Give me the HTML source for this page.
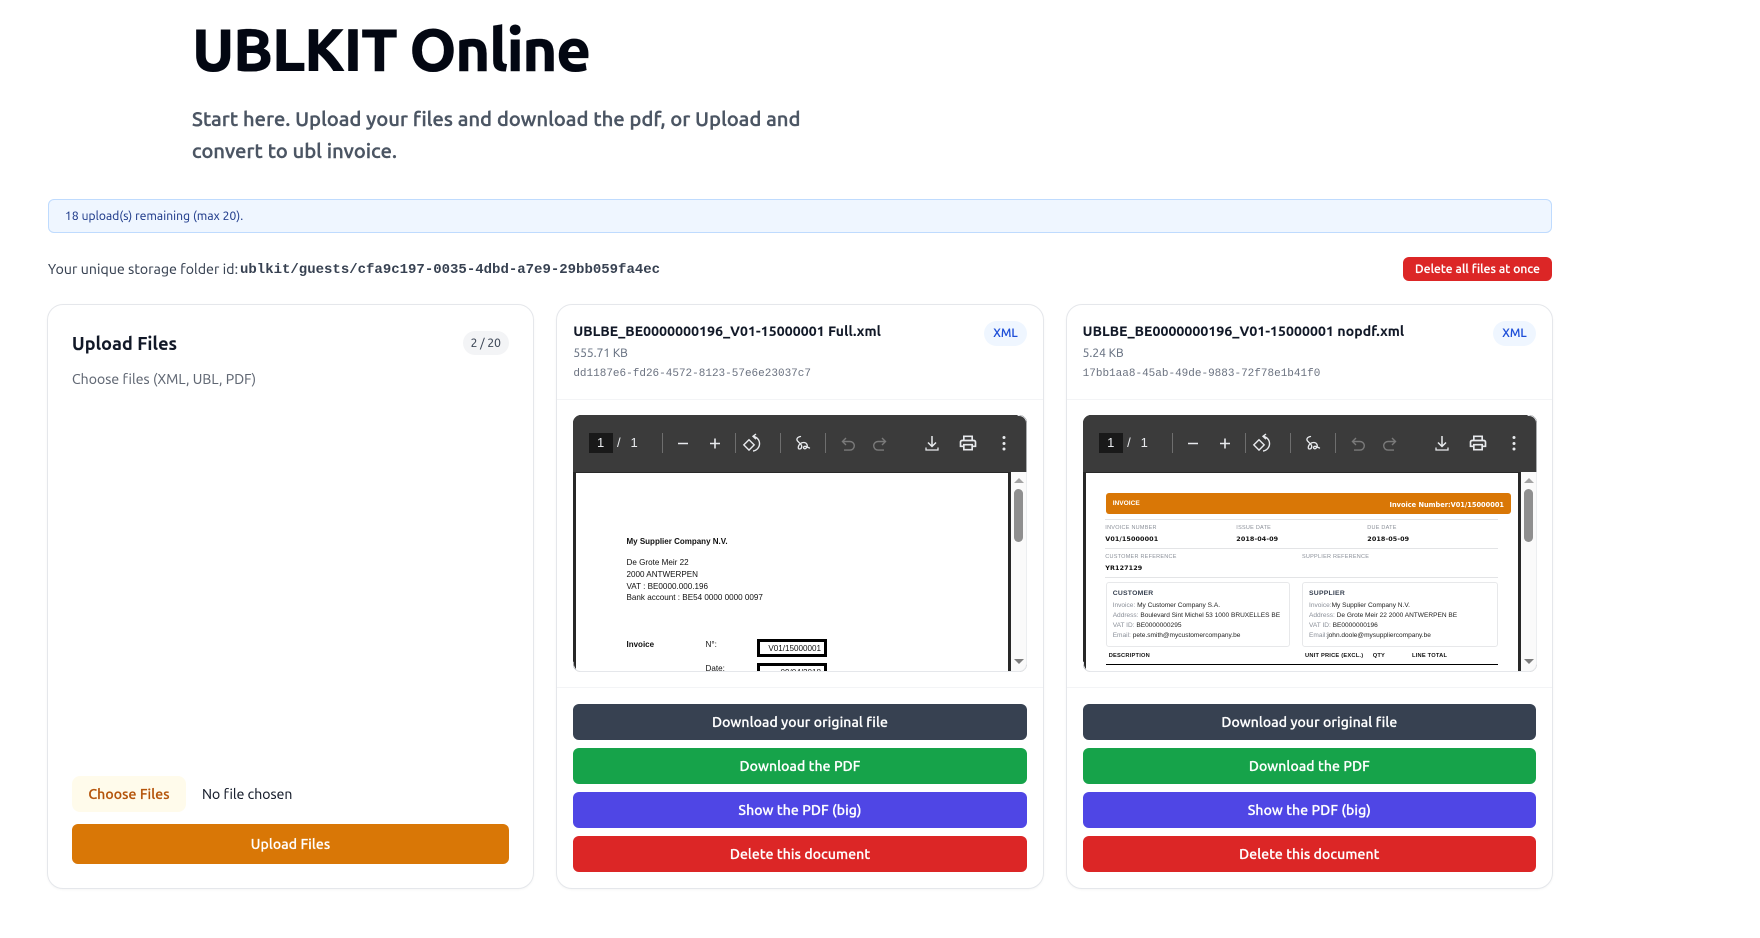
<!DOCTYPE html>
<html lang="en"><head><meta charset="utf-8"><title>UBLKIT Online</title>
<style>
*{box-sizing:border-box}
html,body{margin:0;padding:0;width:1760px;height:938px;overflow:hidden;background:#fff}
body{position:relative;font-family:Ubuntu,"Liberation Sans",sans-serif;color:#111827;-webkit-text-stroke:.1px}
.a,.t,.s{position:absolute}
.t{white-space:nowrap;line-height:20px}
.card{position:absolute;top:303.7px;height:585.5px;width:486.8px;background:#fff;border:1px solid #e5e7eb;border-radius:16px;box-shadow:0 1px 2px rgba(0,0,0,.04)}
.hr{position:absolute;height:1px;background:#f3f4f6;width:484.8px}
.med{font-weight:500;-webkit-text-stroke:.22px;letter-spacing:.1px}
.btn{position:absolute;display:flex;align-items:center;justify-content:center;color:#fff;font-size:14px;font-weight:500;-webkit-text-stroke:.25px;letter-spacing:.09px;border-radius:6px;height:36px;width:453.33px}
.mono{font-family:"Liberation Mono",monospace;-webkit-text-stroke:0}
.v{position:absolute;left:0;top:415px;width:453.33px;height:257px;border-radius:8px;overflow:hidden;background:#282828;-webkit-text-stroke:0}
.v:after{content:"";position:absolute;inset:0;border:1px solid #e5e7eb;border-radius:8px;pointer-events:none;clip-path:polygon(100% 0,100% 100%,0 100%,0 96%,98% 96%,98% 0)}
.tb{position:absolute;left:-573.33px;top:-415px;width:1760px;height:938px}
.tb .bar{position:absolute;left:573px;top:415px;width:455px;height:57px;background:#3b3b3b}
.tb .sep{position:absolute;top:433px;width:1px;height:20px;background:#6e6e6e}
.tb svg{position:absolute;top:433px;width:20px;height:20px}
.tb .n{position:absolute;top:433px;line-height:20px;font-size:13px;color:#e8eaed;font-family:"Liberation Sans",sans-serif}
.track{position:absolute;left:437.33px;top:57px;width:16px;height:200px;background:#fafafa}
.thumb{position:absolute;left:3.4px;top:17px;width:9px;height:53px;border-radius:5px;background:#8f8f8f}
.up,.dn{position:absolute;left:3px;width:0;height:0;border-left:5px solid transparent;border-right:5px solid transparent}
.up{top:6px;border-bottom:5px solid #a3a3a3}
.dn{top:187px;border-top:5px solid #7d7d7d}
.ly{position:absolute;top:-415px;width:1760px;height:938px;filter:blur(.25px);font-family:"Liberation Sans",sans-serif;color:#111}
.ly .t{line-height:12px;margin-top:.8px}
.lb{font-size:5.5px;color:#8b9099;letter-spacing:.25px}
.vl{font-family:"DejaVu Sans",sans-serif;font-size:6.4px;font-weight:700;color:#111;letter-spacing:.1px}
.ln{position:absolute;height:1px;background:#e3e4e6}
.bx{position:absolute;border:1px solid #e7e8ea;border-radius:3px;top:581.5px;height:65.5px}
.bt{font-size:6.8px;font-weight:700;color:#374151;letter-spacing:.25px}
.bt2{margin-top:2px !important}
.tx{font-size:6.55px;color:#222}
.tx i{font-style:normal;color:#8a8f98}
.th{font-size:5.7px;font-weight:700;color:#111;letter-spacing:.22px}
.sm{font-size:8.1px;color:#111}
</style></head><body>

<div class="t" style="left:192px;top:10px;line-height:80px;font-size:60px;font-weight:800;letter-spacing:-1.5px;color:#030712">UBLKIT Online</div>
<div class="t" style="left:192px;top:103px;line-height:32px;font-size:20px;font-weight:500;-webkit-text-stroke:.45px;letter-spacing:.14px;color:#4b5563">Start here. Upload your files and download the pdf, or Upload and</div>
<div class="t" style="left:192px;top:135px;line-height:32px;font-size:20px;font-weight:500;-webkit-text-stroke:.45px;letter-spacing:.14px;color:#4b5563">convert to ubl invoice.</div>

<div class="a" style="left:48px;top:199px;width:1504px;height:34px;background:#eff6ff;border:1px solid #bfdbfe;border-radius:6px"></div>
<div class="t" style="left:65px;top:207px;font-size:12px;letter-spacing:.1px;color:#1e3a8a">18 upload(s) remaining (max 20).</div>

<div class="t" style="left:48px;top:259px;font-size:14px;letter-spacing:.12px;color:#374151">Your unique storage folder id:</div>
<b class="t mono" style="left:240px;top:260px;font-size:14px;color:#374151">ublkit/guests/cfa9c197-0035-4dbd-a7e9-29bb059fa4ec</b>
<div class="a med" style="left:1403px;top:257px;width:149px;height:24px;background:#dc2626;border-radius:6px;color:#fff;font-size:12px;display:flex;align-items:center;justify-content:center">Delete all files at once</div>

<!-- Upload card -->
<div class="card" style="left:47.3px"></div>
<div class="t" style="left:72px;top:334px;font-size:18px;font-weight:700;letter-spacing:.1px;color:#111827">Upload Files</div>
<div class="a" style="left:462.5px;top:331px;width:46.5px;height:24px;border-radius:12px;background:#f3f4f6;color:#374151;font-size:12px;display:flex;align-items:center;justify-content:center">2 / 20</div>
<div class="t" style="left:72px;top:369px;font-size:14px;letter-spacing:.08px;color:#5f6672">Choose files (XML, UBL, PDF)</div>
<div class="a med" style="left:72px;top:776px;width:114px;height:36px;border-radius:8px;background:#fffbeb;color:#b45309;font-size:14px;display:flex;align-items:center;justify-content:center">Choose Files</div>
<div class="t" style="left:202px;top:784px;font-size:14px;letter-spacing:.05px;color:#111827">No file chosen</div>
<div class="a med" style="left:72px;top:824px;width:437px;height:40px;border-radius:6px;background:#d97706;color:#fff;font-size:14px;display:flex;align-items:center;justify-content:center">Upload Files</div>

<!-- Document card 1 -->
<div class="card" style="left:556.3px;width:487.4px"></div>
<div class="hr" style="left:557.3px;top:398.5px;width:485.4px"></div>
<div class="hr" style="left:557.3px;top:687px;width:485.4px"></div>
<div class="t" style="left:573.33px;top:321px;font-size:14px;font-weight:700;letter-spacing:.1px;color:#111827">UBLBE_BE0000000196_V01-15000001 Full.xml</div>
<div class="t" style="left:573.33px;top:343.6px;font-size:12px;color:#667080">555.71 KB</div>
<div class="t mono" style="left:573.33px;top:363.8px;font-size:11px;color:#6b7280">dd1187e6-fd26-4572-8123-57e6e23037c7</div>
<div class="a" style="left:984px;top:321px;width:43px;height:25px;border-radius:13px;background:#eff6ff;color:#1d4ed8;font-size:12px;font-weight:500;display:flex;align-items:center;justify-content:center">XML</div>

<div class="v" style="left:573.33px">
  <div class="tb">
    <div class="bar"></div>
    <div class="a" style="left:589px;top:433px;width:24px;height:20px;background:#191919"></div>
    <div class="n" style="left:597px">1</div><div class="n" style="left:617px">/</div><div class="n" style="left:630.5px">1</div>
    <div class="sep" style="left:662px"></div><div class="sep" style="left:735px"></div><div class="sep" style="left:780px"></div><div class="sep" style="left:825px"></div>
    <svg style="left:672.7px" viewBox="0 0 20 20"><path d="M5 10.5h10" stroke="#e8eaed" stroke-width="1.6" fill="none"/></svg>
    <svg style="left:705px" viewBox="0 0 20 20"><path d="M5 10.5h10M10 5.5v10" stroke="#e8eaed" stroke-width="1.6" fill="none"/></svg>
    <svg style="left:742px" viewBox="0 0 20 20" fill="none" stroke="#e8eaed" stroke-width="1.4"><path d="M7 6.7l5.200 5.200-5.200 5.200-5.200-5.200z"/><path d="M11 3.300A7.400 7.400 0 0 1 11 18"/><path d="M14 1l-3 2.300 3 2.800"/></svg>
    <svg style="left:792px" viewBox="0 0 20 20" fill="none" stroke="#e8eaed" stroke-width="1.3" stroke-linecap="round"><path d="M8.500 3.500C5.500 4 4 6 5.500 8L9 11.500C10.500 13.500 9.500 16 7.500 16 5.500 16 6 12.500 8.500 10.500 10.500 9 14 9 15 11.500 16 14 13.500 16.500 12 15.500 10.800 14.500 12 12.800 14 13.500L17.500 15"/></svg>
    <svg style="left:838px" viewBox="0 0 20 20" fill="none" stroke="#7a7a7a" stroke-width="1.4"><path d="M8 5L4.500 8.500 8 12"/><path d="M4.500 8.500h7.500a4.300 4.300 0 0 1 0 8.600H6"/></svg>
    <svg style="left:870px" viewBox="0 0 20 20" fill="none" stroke="#7a7a7a" stroke-width="1.400"><path d="M12 5l3.500 3.500L12 12"/><path d="M15.500 8.500H8a4.300 4.300 0 0 0 0 8.600h6"/></svg>
    <svg style="left:922px" viewBox="0 0 20 20" fill="none" stroke="#e8eaed" stroke-width="1.500"><path d="M10 3v10M6 9.500l4 4 4-4"/><path d="M4 14.500v2.500h12v-2.500" stroke-width="1.300"/></svg>
    <svg style="left:958px" viewBox="0 0 24 24" fill="#e8eaed"><path d="M19 8h-1V3H6v5H5c-1.660 0-3 1.340-3 3v6h4v4h12v-4h4v-6c0-1.660-1.340-3-3-3zM8 5h8v3H8V5zm8 12v2H8v-4h8v2zm2-2v-2H6v2H4v-4c0-.55.45-1 1-1h14c.55 0 1 .45 1 1v4h-2z"/></svg>
    <svg style="left:994px" viewBox="0 0 20 20" fill="#e8eaed"><circle cx="10" cy="4.500" r="1.500"/><circle cx="10" cy="10.500" r="1.500"/><circle cx="10" cy="16" r="1.500"/></svg>
  </div>
  <div class="ly" style="left:-573.33px">
    <div class="a" style="left:576px;top:473px;width:432px;height:199px;background:#fff"></div>
    <div class="t" style="left:626.500px;top:535px;font-size:8px;font-weight:700">My Supplier Company N.V.</div>
    <div class="t sm" style="left:626.500px;top:556px">De Grote Meir 22</div>
    <div class="t sm" style="left:626.500px;top:568px">2000 ANTWERPEN</div>
    <div class="t sm" style="left:626.500px;top:580px">VAT : BE0000.000.196</div>
    <div class="t sm" style="left:626.500px;top:591px">Bank account : BE54 0000 0000 0097</div>
    <div class="t" style="left:626.500px;top:638px;font-size:8px;font-weight:700">Invoice</div>
    <div class="t sm" style="left:705.500px;top:638px">N°:</div>
    <div class="a" style="left:757px;top:639px;width:70px;height:18px;border:3px solid #000"></div>
    <div class="t sm" style="left:767px;top:642px;width:54px;text-align:right">V01/15000001</div>
    <div class="t sm" style="left:705.500px;top:662px">Date:</div>
    <div class="a" style="left:757px;top:663px;width:70px;height:18px;border:3px solid #000"></div>
    <div class="t sm" style="left:767px;top:666px;width:54px;text-align:right">09/04/2018</div>
  </div>
  <div class="track"><div class="up"></div><div class="thumb"></div><div class="dn"></div></div>
</div>

<div class="btn" style="left:573.33px;top:704px;background:#374151">Download your original file</div>
<div class="btn" style="left:573.33px;top:748px;background:#16a34a">Download the PDF</div>
<div class="btn" style="left:573.33px;top:792px;background:#4f46e5">Show the PDF (big)</div>
<div class="btn" style="left:573.33px;top:836px;background:#dc2626">Delete this document</div>

<!-- Document card 2 -->
<div class="card" style="left:1066px"></div>
<div class="hr" style="left:1067px;top:398.5px"></div>
<div class="hr" style="left:1067px;top:687px"></div>
<div class="t" style="left:1082.67px;top:321px;font-size:14px;font-weight:700;letter-spacing:.1px;color:#111827">UBLBE_BE0000000196_V01-15000001 nopdf.xml</div>
<div class="t" style="left:1082.67px;top:343.6px;font-size:12px;color:#667080">5.24 KB</div>
<div class="t mono" style="left:1082.67px;top:363.8px;font-size:11px;color:#6b7280">17bb1aa8-45ab-49de-9883-72f78e1b41f0</div>
<div class="a" style="left:1493px;top:321px;width:43px;height:25px;border-radius:13px;background:#eff6ff;color:#1d4ed8;font-size:12px;font-weight:500;display:flex;align-items:center;justify-content:center">XML</div>

<div class="v" style="left:1082.67px;width:454px">
  <div class="tb" style="left:-572.5px">
    <div class="bar"></div>
    <div class="a" style="left:589px;top:433px;width:24px;height:20px;background:#191919"></div>
    <div class="n" style="left:597px">1</div><div class="n" style="left:617px">/</div><div class="n" style="left:630.5px">1</div>
    <div class="sep" style="left:662px"></div><div class="sep" style="left:735px"></div><div class="sep" style="left:780px"></div><div class="sep" style="left:825px"></div>
    <svg style="left:672.7px" viewBox="0 0 20 20"><path d="M5 10.5h10" stroke="#e8eaed" stroke-width="1.6" fill="none"/></svg>
    <svg style="left:705px" viewBox="0 0 20 20"><path d="M5 10.5h10M10 5.5v10" stroke="#e8eaed" stroke-width="1.6" fill="none"/></svg>
    <svg style="left:742px" viewBox="0 0 20 20" fill="none" stroke="#e8eaed" stroke-width="1.4"><path d="M7 6.7l5.200 5.200-5.200 5.200-5.200-5.200z"/><path d="M11 3.300A7.400 7.400 0 0 1 11 18"/><path d="M14 1l-3 2.300 3 2.800"/></svg>
    <svg style="left:792px" viewBox="0 0 20 20" fill="none" stroke="#e8eaed" stroke-width="1.3" stroke-linecap="round"><path d="M8.500 3.500C5.500 4 4 6 5.500 8L9 11.500C10.500 13.500 9.500 16 7.500 16 5.500 16 6 12.500 8.500 10.500 10.500 9 14 9 15 11.500 16 14 13.500 16.500 12 15.500 10.800 14.500 12 12.800 14 13.500L17.500 15"/></svg>
    <svg style="left:838px" viewBox="0 0 20 20" fill="none" stroke="#7a7a7a" stroke-width="1.4"><path d="M8 5L4.500 8.500 8 12"/><path d="M4.500 8.500h7.500a4.300 4.300 0 0 1 0 8.600H6"/></svg>
    <svg style="left:870px" viewBox="0 0 20 20" fill="none" stroke="#7a7a7a" stroke-width="1.400"><path d="M12 5l3.500 3.500L12 12"/><path d="M15.500 8.500H8a4.300 4.300 0 0 0 0 8.600h6"/></svg>
    <svg style="left:922px" viewBox="0 0 20 20" fill="none" stroke="#e8eaed" stroke-width="1.500"><path d="M10 3v10M6 9.500l4 4 4-4"/><path d="M4 14.500v2.500h12v-2.500" stroke-width="1.300"/></svg>
    <svg style="left:958px" viewBox="0 0 24 24" fill="#e8eaed"><path d="M19 8h-1V3H6v5H5c-1.660 0-3 1.340-3 3v6h4v4h12v-4h4v-6c0-1.660-1.340-3-3-3zM8 5h8v3H8V5zm8 12v2H8v-4h8v2zm2-2v-2H6v2H4v-4c0-.55.45-1 1-1h14c.55 0 1 .45 1 1v4h-2z"/></svg>
    <svg style="left:994px" viewBox="0 0 20 20" fill="#e8eaed"><circle cx="10" cy="4.500" r="1.500"/><circle cx="10" cy="10.500" r="1.500"/><circle cx="10" cy="16" r="1.500"/></svg>
  </div>
  <div class="ly" style="left:-1082.67px">
    <div class="a" style="left:1085.500px;top:473px;width:432px;height:199px;background:#fff"></div>
    <div class="a" style="left:1106px;top:492.700px;width:405.300px;height:21px;background:#d97706;border-radius:3px"></div>
    <div class="t" style="left:1112.700px;top:497.700px;font-size:6.600px;font-weight:700;color:#fff">INVOICE</div>
    <div class="t" style="left:1380px;top:498.700px;width:124px;text-align:right;font-family:'DejaVu Sans',sans-serif;font-size:6.600px;font-weight:700;color:#fff">Invoice Number:V01/15000001</div>
    <div class="ln" style="left:1105px;top:518.500px;width:393px"></div>
    <div class="t lb" style="left:1105.300px;top:521px">INVOICE NUMBER</div>
    <div class="t lb" style="left:1236.300px;top:521px">ISSUE DATE</div>
    <div class="t lb" style="left:1367.300px;top:521px">DUE DATE</div>
    <div class="t vl" style="left:1105.300px;top:532.700px">V01/15000001</div>
    <div class="t vl" style="left:1236.300px;top:532.700px">2018-04-09</div>
    <div class="t vl" style="left:1367.300px;top:532.700px">2018-05-09</div>
    <div class="ln" style="left:1105px;top:547.500px;width:393px"></div>
    <div class="t lb" style="left:1105.300px;top:550px">CUSTOMER REFERENCE</div>
    <div class="t lb" style="left:1302px;top:550px">SUPPLIER REFERENCE</div>
    <div class="t vl" style="left:1105.300px;top:561.700px">YR127129</div>
    <div class="ln" style="left:1105px;top:576.500px;width:393px"></div>
    <div class="bx" style="left:1105.500px;width:184.500px"></div>
    <div class="bx" style="left:1302px;width:196px"></div>
    <div class="t bt bt2" style="left:1112.700px;top:586.300px">CUSTOMER</div>
    <div class="t tx" style="left:1112.700px;top:599.700px"><i>Invoice:</i> My Customer Company S.A.</div>
    <div class="t tx" style="left:1112.700px;top:609.700px"><i>Address:</i> Boulevard Sint Michel 53 1000 BRUXELLES BE</div>
    <div class="t tx" style="left:1112.700px;top:619.700px"><i>VAT ID:</i> BE0000000295</div>
    <div class="t tx" style="left:1112.700px;top:629.700px"><i>Email:</i> pete.smith@mycustomercompany.be</div>
    <div class="t bt bt2" style="left:1309px;top:586.300px">SUPPLIER</div>
    <div class="t tx" style="left:1309px;top:599.700px"><i>Invoice:</i>My Supplier Company N.V.</div>
    <div class="t tx" style="left:1309px;top:609.700px"><i>Address:</i> De Grote Meir 22 2000 ANTWERPEN BE</div>
    <div class="t tx" style="left:1309px;top:619.700px"><i>VAT ID:</i> BE0000000196</div>
    <div class="t tx" style="left:1309px;top:629.700px"><i>Email:</i>john.doole@mysuppliercompany.be</div>
    <div class="t th" style="left:1108.700px;top:649.700px">DESCRIPTION</div>
    <div class="t th" style="left:1305px;top:649.700px">UNIT PRICE (EXCL.)</div>
    <div class="t th" style="left:1372.700px;top:649.700px">QTY</div>
    <div class="t th" style="left:1412px;top:649.700px">LINE TOTAL</div>
    <div class="a" style="left:1105.500px;top:663.500px;width:392.500px;height:1.300px;background:#000"></div>
  </div>
  <div class="track" style="left:438px"><div class="up"></div><div class="thumb"></div><div class="dn"></div></div>
</div>

<div class="btn" style="left:1082.67px;top:704px;background:#374151">Download your original file</div>
<div class="btn" style="left:1082.67px;top:748px;background:#16a34a">Download the PDF</div>
<div class="btn" style="left:1082.67px;top:792px;background:#4f46e5">Show the PDF (big)</div>
<div class="btn" style="left:1082.67px;top:836px;background:#dc2626">Delete this document</div>

</body></html>
